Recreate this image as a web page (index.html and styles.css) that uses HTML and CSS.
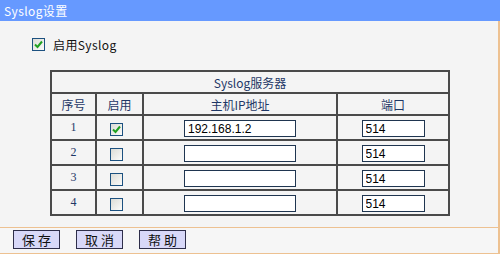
FILE: index.html
```html
<!DOCTYPE html>
<html lang="zh-CN">
  <head>
    <meta charset="UTF-8" />
    <title>Syslog设置</title>
    <link rel="stylesheet" href="styles.css">
  </head>
  <body>
    <div class="page">
      <div class="title-bar">Syslog设置</div>

      <div class="content">
        <label class="enable-row">
          <span class="check checked">
            <svg viewBox="0 0 11 11" width="11" height="11"><path d="M2 5.5 L4.5 8 L9 2.5" fill="none" stroke="#21a121" stroke-width="2"/></svg>
          </span>
          <span class="enable-text">启用Syslog</span>
        </label>

        <table class="server-table">
          <colgroup>
            <col class="col-no">
            <col class="col-on">
            <col class="col-ip">
            <col class="col-port">
          </colgroup>
          <tr class="head-row">
            <th colspan="4">Syslog服务器</th>
          </tr>
          <tr class="head-row">
            <th>序号</th>
            <th>启用</th>
            <th>主机IP地址</th>
            <th>端口</th>
          </tr>
          <tr>
            <td class="num">1</td>
            <td class="on-cell">
              <span class="check checked">
                <svg viewBox="0 0 11 11" width="11" height="11"><path d="M2 5.5 L4.5 8 L9 2.5" fill="none" stroke="#21a121" stroke-width="2"/></svg>
              </span>
            </td>
            <td><input class="ip-input" type="text" value="192.168.1.2"></td>
            <td><input class="port-input" type="text" value="514"></td>
          </tr>
          <tr>
            <td class="num">2</td>
            <td class="on-cell"><span class="check"></span></td>
            <td><input class="ip-input" type="text" value=""></td>
            <td><input class="port-input" type="text" value="514"></td>
          </tr>
          <tr>
            <td class="num">3</td>
            <td class="on-cell"><span class="check"></span></td>
            <td><input class="ip-input" type="text" value=""></td>
            <td><input class="port-input" type="text" value="514"></td>
          </tr>
          <tr>
            <td class="num">4</td>
            <td class="on-cell"><span class="check"></span></td>
            <td><input class="ip-input" type="text" value=""></td>
            <td><input class="port-input" type="text" value="514"></td>
          </tr>
        </table>
      </div>

      <div class="button-bar">
        <button class="btn">保 存</button>
        <button class="btn">取 消</button>
        <button class="btn">帮 助</button>
      </div>
    </div>
  </body>
</html>
```

FILE: styles.css
```css
* {
  margin: 0;
  padding: 0;
  box-sizing: border-box;
}

body {
  background: #f4f4f4;
  font-family: "Noto Sans CJK SC", "DejaVu Sans", sans-serif;
  font-size: 12px;
  width: 500px;
  height: 254px;
  overflow: hidden;
}

.page {
  width: 500px;
}

.title-bar {
  height: 21px;
  background: #6699ff;
  color: #fff;
  font-size: 12px;
  line-height: 21px;
  padding-left: 4px;
  letter-spacing: 0.4px;
}

.content {
  border-right: 2px solid #edc191;
  padding-top: 17px;
  padding-bottom: 11px;
}

.enable-row {
  display: flex;
  align-items: center;
  margin-left: 32px;
  height: 13px;
  color: #111;
}

.enable-text {
  margin-left: 8px;
  letter-spacing: 0.4px;
}

.check {
  display: inline-flex;
  align-items: center;
  justify-content: center;
  width: 13px;
  height: 13px;
  border: 1px solid #1c5180;
  background: linear-gradient(135deg, #dcdcd6 0%, #fbfbfa 100%);
  vertical-align: middle;
}

.server-table {
  margin-top: 19px;
  margin-left: 50px;
  width: 398px;
  border: 1px solid #4a4a4a;
  border-spacing: 0;
  table-layout: fixed;
  color: #1e3766;
}

.col-no { width: 45px; }
.col-on { width: 47px; }
.col-ip { width: 194px; }
.col-port { width: 112px; }

.server-table th,
.server-table td {
  border: 1px solid #4a4a4a;
  text-align: center;
  font-weight: normal;
  padding: 0;
}

.head-row th {
  height: 22px;
}

.server-table td {
  height: 25px;
}

.server-table td.on-cell {
  padding-right: 6px;
}

.num {
  font-family: "Liberation Serif", serif;
}

.ip-input,
.port-input {
  height: 17px;
  border: 1px solid #1f3550;
  background: #fff;
  font-family: "Liberation Sans", sans-serif;
  font-size: 12px;
  color: #000;
  padding: 0 3px;
  vertical-align: middle;
}

.ip-input {
  width: 112px;
}

.port-input {
  width: 63px;
}

.button-bar {
  display: flex;
  gap: 16px;
  height: 27px;
  padding: 2px 0 0 13px;
  border-top: 1px solid #edc191;
  border-bottom: 1px solid #edc191;
  border-right: 2px solid #edc191;
  background: #f6f6f6;
}

.btn {
  width: 47px;
  height: 19px;
  background: #d8d8f8;
  border: 1px solid #2e2e4a;
  font-family: "Noto Sans CJK SC", sans-serif;
  font-size: 13px;
  line-height: 17px;
  color: #111;
}
```
